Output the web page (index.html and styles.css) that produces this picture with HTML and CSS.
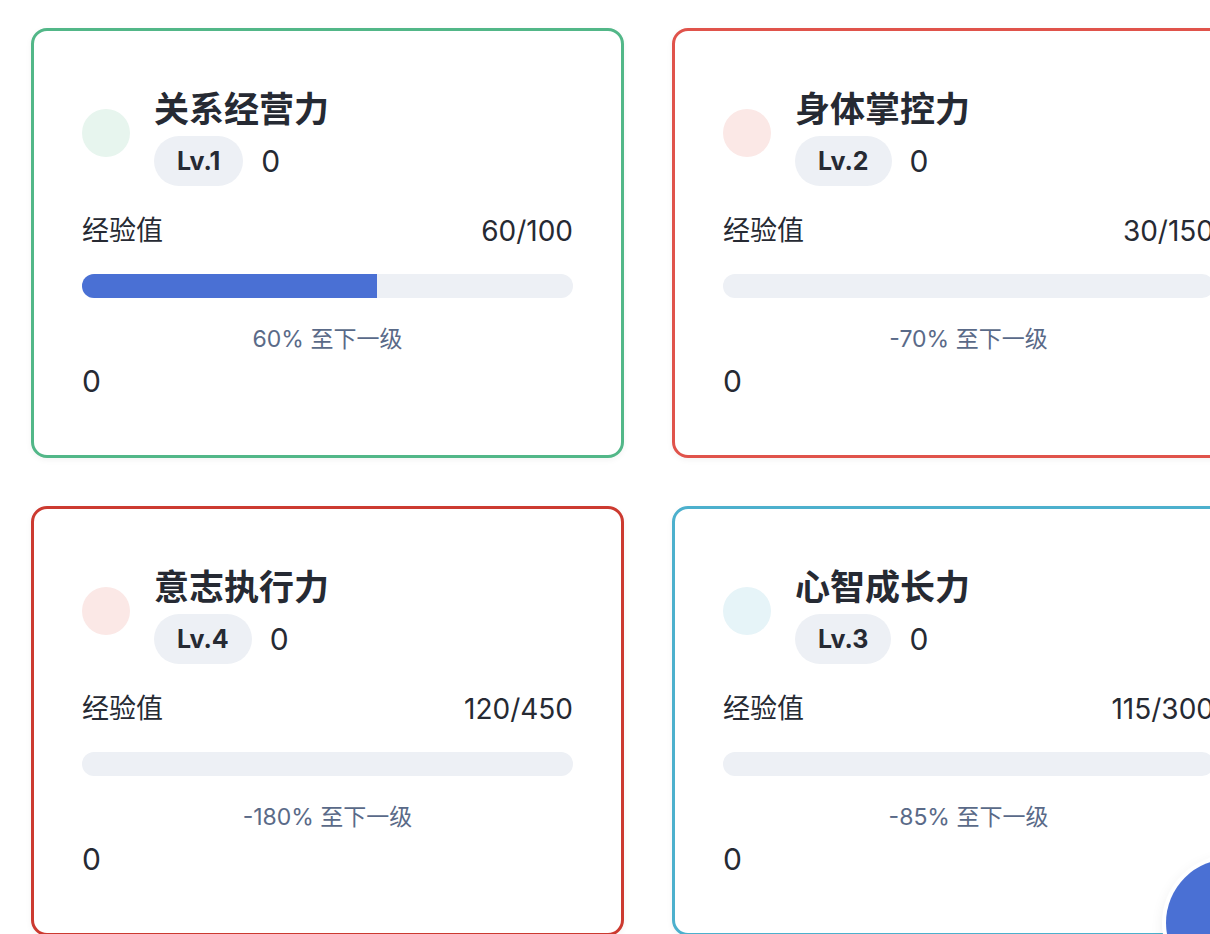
FILE: index.html
```html
<!DOCTYPE html>
<html lang="zh-CN">
<head>
<meta charset="utf-8">
<title>能力</title>
<link rel="stylesheet" href="styles.css">
</head>
<body>
<main class="grid">
  <section class="card card-green">
    <div class="head">
      <span class="dot dot-green"></span>
      <div class="head-text">
        <h2 class="title">关系经营力</h2>
        <div class="lv-row"><span class="badge">Lv.1</span><span class="num">0</span></div>
      </div>
    </div>
    <div class="exp-row"><span>经验值</span><span class="exp-val">60/100</span></div>
    <div class="bar"><div class="fill" style="width:60%"></div></div>
    <div class="next">60% 至下一级</div>
    <div class="num foot">0</div>
  </section>

  <section class="card card-red">
    <div class="head">
      <span class="dot dot-red"></span>
      <div class="head-text">
        <h2 class="title">身体掌控力</h2>
        <div class="lv-row"><span class="badge">Lv.2</span><span class="num">0</span></div>
      </div>
    </div>
    <div class="exp-row"><span>经验值</span><span class="exp-val">30/150</span></div>
    <div class="bar"><div class="fill" style="width:0%"></div></div>
    <div class="next">-70% 至下一级</div>
    <div class="num foot">0</div>
  </section>

  <section class="card card-darkred">
    <div class="head">
      <span class="dot dot-red"></span>
      <div class="head-text">
        <h2 class="title">意志执行力</h2>
        <div class="lv-row"><span class="badge">Lv.4</span><span class="num">0</span></div>
      </div>
    </div>
    <div class="exp-row"><span>经验值</span><span class="exp-val">120/450</span></div>
    <div class="bar"><div class="fill" style="width:0%"></div></div>
    <div class="next">-180% 至下一级</div>
    <div class="num foot">0</div>
  </section>

  <section class="card card-blue">
    <div class="head">
      <span class="dot dot-blue"></span>
      <div class="head-text">
        <h2 class="title">心智成长力</h2>
        <div class="lv-row"><span class="badge">Lv.3</span><span class="num">0</span></div>
      </div>
    </div>
    <div class="exp-row"><span>经验值</span><span class="exp-val">115/300</span></div>
    <div class="bar"><div class="fill" style="width:0%"></div></div>
    <div class="next">-85% 至下一级</div>
    <div class="num foot">0</div>
  </section>
</main>
<button class="fab" aria-label="add"></button>
</body>
</html>
```

FILE: styles.css
```css
html, body {
  margin: 0;
  padding: 0;
  overflow: hidden;
  background: #ffffff;
}
body {
  font-family: "Inter", "Noto Sans CJK SC", sans-serif;
  color: #262a33;
  width: 1210px;
  height: 934px;
}
.grid {
  display: grid;
  grid-template-columns: 593px 593px;
  column-gap: 48px;
  row-gap: 48px;
  padding: 28px 0 0 31px;
  width: max-content;
}
.card {
  box-sizing: border-box;
  border: 3px solid #52b788;
  border-radius: 16px;
  padding: 48px 48px 53px;
  display: flex;
  flex-direction: column;
  background: #fff;
  box-shadow: 0 2px 6px rgba(0, 0, 0, 0.05);
}
.card-green { border-color: #52b788; }
.card-red { border-color: #e0534b; }
.card-darkred { border-color: #cc3a30; }
.card-blue { border-color: #4cb0cd; }

.head {
  display: flex;
  align-items: center;
  gap: 24px;
}
.dot {
  width: 48px;
  height: 48px;
  border-radius: 50%;
  flex: none;
}
.dot-green { background: #e7f5ee; }
.dot-red { background: #fbe8e6; }
.dot-blue { background: #e6f4f8; }
.head-text {
  display: flex;
  flex-direction: column;
}
.title {
  margin: 0;
  font-size: 35px;
  line-height: 56px;
  font-weight: 700;
  color: #262a33;
  font-family: "Noto Sans CJK SC", sans-serif;
}
.lv-row {
  display: flex;
  align-items: center;
  gap: 18px;
  margin-top: 1px;
}
.badge {
  height: 50px;
  line-height: 50px;
  padding: 0 23px;
  border-radius: 25px;
  background: #edf0f5;
  font-size: 25px;
  font-weight: 700;
  color: #262a33;
}
.num {
  font-size: 30px;
  line-height: 42px;
  font-weight: 400;
  color: #262a33;
}
.exp-row {
  display: flex;
  justify-content: space-between;
  margin-top: 25px;
  font-size: 27px;
  line-height: 40px;
}
.exp-val {
  font-size: 28px;
}
.bar {
  margin-top: 23px;
  height: 24px;
  border-radius: 12px;
  background: #edf0f5;
  overflow: hidden;
}
.fill {
  height: 100%;
  background: #4a70d4;
}
.next {
  margin-top: 25px;
  text-align: center;
  font-size: 23px;
  line-height: 33px;
  color: #5a6a88;
}
.foot {
  margin-top: 4px;
}
.fab {
  position: fixed;
  left: 1166px;
  top: 859px;
  width: 128px;
  height: 128px;
  border-radius: 50%;
  border: none;
  padding: 0;
  background: #4a70d4;
  box-shadow: 0 0 0 4px #ffffff, 0 4px 16px rgba(0, 0, 0, 0.12);
}
```
